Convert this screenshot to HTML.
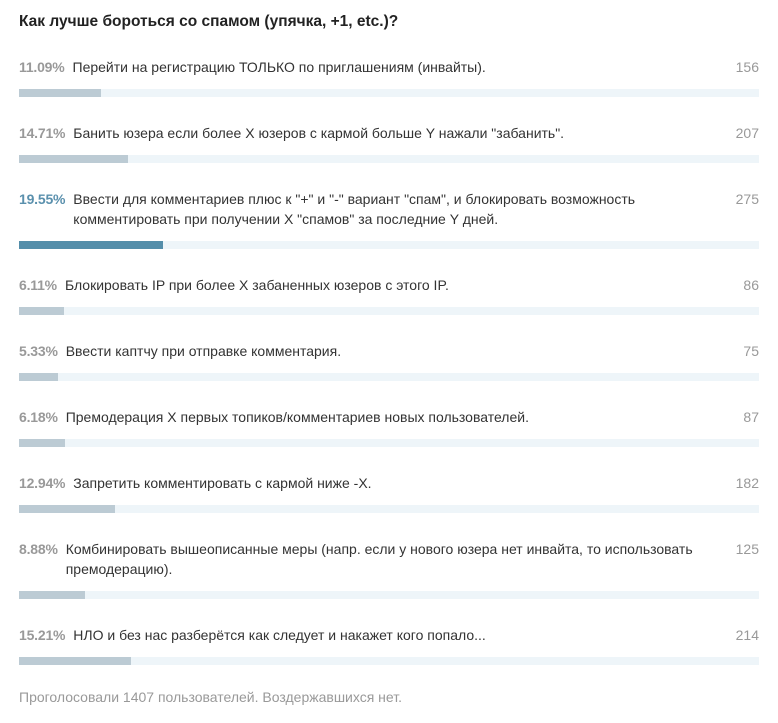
<!DOCTYPE html>
<html><head><meta charset="utf-8"><style>
body{margin:0;background:#fff;font-family:"Liberation Sans",Arial,sans-serif;width:778px;height:723px;position:relative;overflow:hidden}
h1{position:absolute;left:19px;top:12px;margin:0;font-size:15.5px;font-weight:bold;color:#222;line-height:20px}
.t{position:absolute;left:19px;font-size:14px;line-height:20px;color:#333;white-space:nowrap;display:flex}
.t b{color:#999;font-weight:bold;margin-right:8px;letter-spacing:-0.2px}
.t b.a{color:#5a90ad}
.c{position:absolute;right:19px;font-size:14px;line-height:20px;color:#999}
.bar{position:absolute;left:19px;width:740px;height:8px;background:#eef5f9}
.bar i{display:block;height:8px;background:#bccbd4}
.bar i.a{background:#548eaa}
.f{position:absolute;left:19px;top:687px;font-size:14px;line-height:20px;color:#999}
</style></head><body>
<h1>Как лучше бороться со спамом (упячка, +1, etc.)?</h1>

<div class="t" style="top:57px"><b>11.09%</b><span>Перейти на регистрацию ТОЛЬКО по приглашениям (инвайты).</span></div>
<div class="c" style="top:57px">156</div>
<div class="bar" style="top:89px"><i style="width:82px"></i></div>

<div class="t" style="top:123px"><b>14.71%</b><span>Банить юзера если более X юзеров с кармой больше Y нажали "забанить".</span></div>
<div class="c" style="top:123px">207</div>
<div class="bar" style="top:155px"><i style="width:109px"></i></div>

<div class="t" style="top:189px"><b class="a">19.55%</b><span>Ввести для комментариев плюс к "+" и "-" вариант "спам", и блокировать возможность<br>комментировать при получении X "спамов" за последние Y дней.</span></div>
<div class="c" style="top:189px">275</div>
<div class="bar" style="top:241px"><i class="a" style="width:144px"></i></div>

<div class="t" style="top:275px"><b>6.11%</b><span>Блокировать IP при более X забаненных юзеров с этого IP.</span></div>
<div class="c" style="top:275px">86</div>
<div class="bar" style="top:307px"><i style="width:45px"></i></div>

<div class="t" style="top:341px"><b>5.33%</b><span>Ввести каптчу при отправке комментария.</span></div>
<div class="c" style="top:341px">75</div>
<div class="bar" style="top:373px"><i style="width:39px"></i></div>

<div class="t" style="top:407px"><b>6.18%</b><span>Премодерация X первых топиков/комментариев новых пользователей.</span></div>
<div class="c" style="top:407px">87</div>
<div class="bar" style="top:439px"><i style="width:46px"></i></div>

<div class="t" style="top:473px"><b>12.94%</b><span>Запретить комментировать с кармой ниже -X.</span></div>
<div class="c" style="top:473px">182</div>
<div class="bar" style="top:505px"><i style="width:96px"></i></div>

<div class="t" style="top:539px"><b>8.88%</b><span>Комбинировать вышеописанные меры (напр. если у нового юзера нет инвайта, то использовать<br>премодерацию).</span></div>
<div class="c" style="top:539px">125</div>
<div class="bar" style="top:591px"><i style="width:66px"></i></div>

<div class="t" style="top:625px"><b>15.21%</b><span>НЛО и без нас разберётся как следует и накажет кого попало...</span></div>
<div class="c" style="top:625px">214</div>
<div class="bar" style="top:657px"><i style="width:112px"></i></div>

<div class="f">Проголосовали 1407 пользователей. Воздержавшихся нет.</div>
</body></html>
